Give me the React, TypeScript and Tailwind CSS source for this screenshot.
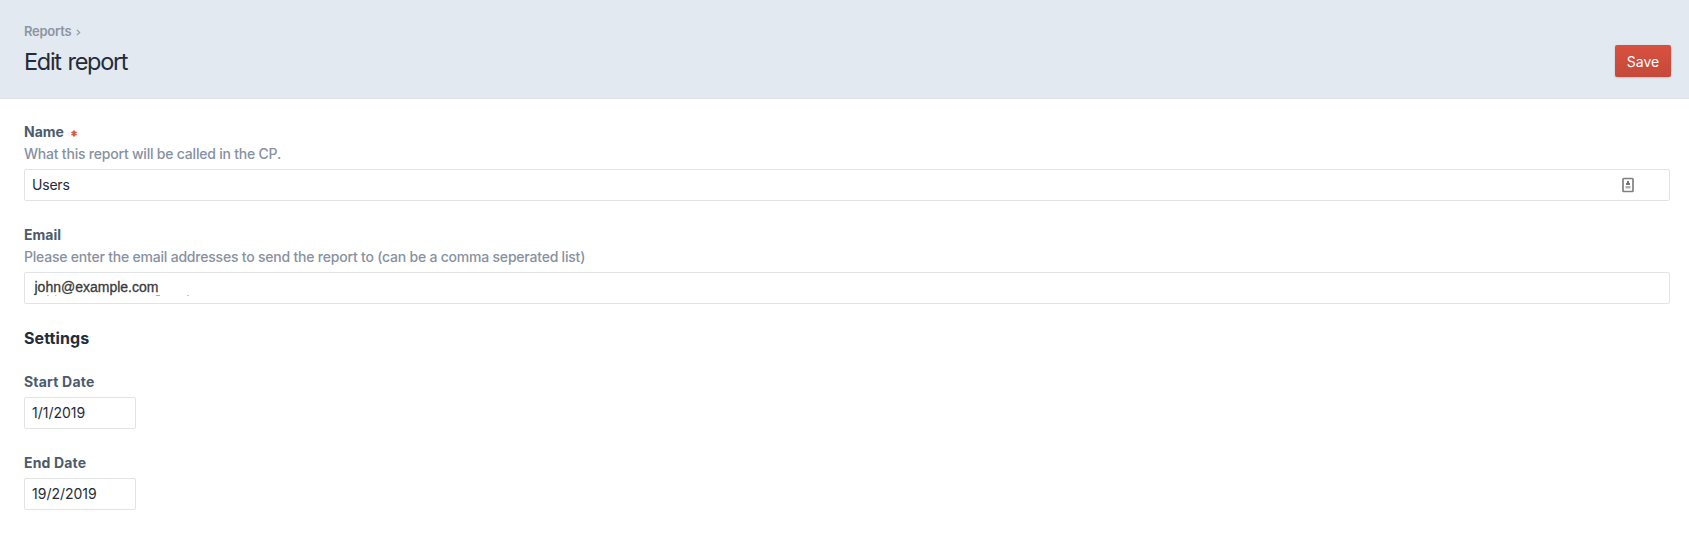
import type { ReactNode } from 'react';

function Field({ label, labelClass = '', required, help, children }: {
  label: string;
  labelClass?: string;
  required?: boolean;
  help?: ReactNode;
  children: ReactNode;
}) {
  return (
    <div className="flex flex-col items-start">
      <div className="flex h-5 items-center">
        <label className={`text-[14px] leading-5 font-bold text-[#4c5b6c] ${labelClass}`}>{label}</label>
        {required && (
          <svg className="mt-[3px] ml-[7px] h-[7px] w-[6px]" viewBox="0 0 6 7" stroke="#da5a47" strokeWidth="1.9" aria-hidden="true">
            <path d="M3 .6v5.8M.5 2l5 3M5.5 2L.5 5" />
          </svg>
        )}
      </div>
      {help}
      {children}
    </div>
  );
}

const box = 'flex h-8 items-center rounded-[2px] border border-[#e2e3e5] bg-white px-[7px] text-[14px] leading-5 text-[#232c37]';
const helpText = 'mt-[2px] mb-[5px] text-[14px] leading-5 font-medium text-[#8791a0] tracking-[-0.21px]';

export default function App() {
  return (
    <div className="h-[540px] overflow-hidden bg-white font-['Inter',sans-serif]">
      <header className="flex h-[99px] items-start justify-between border-b border-[#e0e4e9] bg-[#e3e9f0] pr-[18px] pl-6">
        <div className="pt-[21px]">
          <nav className="flex h-5 items-center text-[13px] leading-5 font-semibold text-[#8b95a3]">
            <a className="tracking-[-0.25px]">Reports</a>
            <svg className="mt-[3px] ml-[5px] h-[7px] w-[5px]" viewBox="0 0 5 7" fill="none" stroke="#8b95a3" strokeWidth="1.1" aria-hidden="true">
              <path d="M.8 .8L3.7 3.5L.8 6.2" />
            </svg>
          </nav>
          <h1 className="mt-[5px] text-[23.5px] leading-8 font-normal tracking-[-1.3px] text-[#232c37] [word-spacing:1.5px]">Edit report</h1>
        </div>
        <button className="mt-[45px] h-8 w-14 rounded-[2px] bg-linear-to-b from-[#d9503f] to-[#c54a3a] pt-px text-[14px] leading-5 text-white shadow-[0_0_1px_rgba(0,0,0,0.2),0_1px_2px_rgba(0,0,0,0.12)]">Save</button>
      </header>
      <main className="flex flex-col pt-[23px] pr-[19px] pl-6">
        <Field label="Name" required help={<p className={helpText}>What this report will be called in the CP.</p>}>
          <div className={`${box} w-full justify-between`}>
            <span className="tracking-[-0.2px]">Users</span>
            <svg className="mr-[28px] h-4 w-3" viewBox="0 0 12 16" aria-hidden="true">
              <rect x="1" y="1.5" width="10" height="13" rx=".7" fill="#fff" stroke="#808080" strokeWidth="1.7" />
              <path d="M5 4h2v2h1v2H4V6h1z" fill="#747474" />
              <path d="M3.5 9h5v2.5h-5z" fill="#b0b0b0" />
            </svg>
          </div>
        </Field>
        <div className="mt-6">
          <Field label="Email" help={<p className={helpText}>Please enter the email addresses to send the report to (can be a comma seperated list)</p>}>
            <div className={`${box} relative w-full`}>
              <span className="relative -top-px ml-[2.5px] font-['Liberation_Sans',Arial,sans-serif] text-[14px] text-[#3a3a3a] [-webkit-text-stroke:0.3px_#3a3a3a]">john@example.com</span>
              <svg className="absolute top-[22px] left-[21px] h-[2px] w-[146px]" viewBox="0 0 146 2" aria-hidden="true">
                <path d="M1 .5h2M9 .5h1.500M141 .5h2" stroke="#c4c7cb" />
                <path d="M110 .5h4" stroke="#a9adb2" />
              </svg>
            </div>
          </Field>
        </div>
        <h2 className="mt-[22px] text-[16px] leading-6 font-bold tracking-[0.1px] text-[#232c37]">Settings</h2>
        <div className="mt-[22px]">
          <Field label="Start Date" labelClass="tracking-[0.2px]">
            <div className={`${box} mt-[5px] w-28`}>1/1/2019</div>
          </Field>
        </div>
        <div className="mt-6">
          <Field label="End Date" labelClass="tracking-[0.15px]">
            <div className={`${box} mt-[5px] w-28`}>19/2/2019</div>
          </Field>
        </div>
      </main>
    </div>
  );
}
